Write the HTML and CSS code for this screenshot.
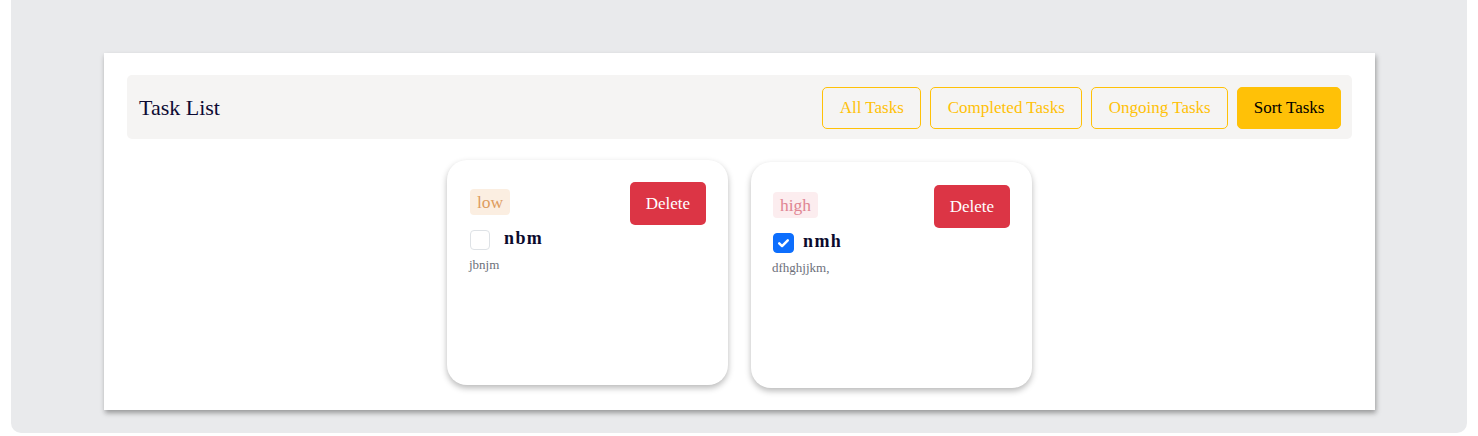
FILE: index.html
```html
<!DOCTYPE html>
<html lang="en">
<head>
<meta charset="utf-8">
<title>Task List</title>
<link rel="stylesheet" href="styles.css">
</head>
<body>
  <div class="app">
    <section class="panel">
      <header class="toolbar">
        <h1 class="toolbar-title">Task List</h1>
        <nav class="toolbar-actions">
          <button class="btn btn-outline">All Tasks</button>
          <button class="btn btn-outline">Completed Tasks</button>
          <button class="btn btn-outline">Ongoing Tasks</button>
          <button class="btn btn-solid">Sort Tasks</button>
        </nav>
      </header>
      <div class="cards">
        <article class="card">
          <div class="card-head">
            <span class="badge badge-low">low</span>
            <button class="btn-delete">Delete</button>
          </div>
          <div class="card-task">
            <span class="check"></span>
            <span class="task-title">nbm</span>
          </div>
          <p class="task-desc">jbnjm</p>
        </article>
        <article class="card card-shifted">
          <div class="card-head">
            <span class="badge badge-high">high</span>
            <button class="btn-delete">Delete</button>
          </div>
          <div class="card-task card-task-tight">
            <span class="check check-on">
              <svg viewBox="0 0 20 20" width="20" height="20"><path d="M5.5 10.3l3 2.9 6-6" fill="none" stroke="#fff" stroke-width="2.6" stroke-linecap="round" stroke-linejoin="round"/></svg>
            </span>
            <span class="task-title">nmh</span>
          </div>
          <p class="task-desc">dfhghjjkm,</p>
        </article>
      </div>
    </section>
  </div>
</body>
</html>
```
FILE: styles.css
```css
* { box-sizing: border-box; }
html, body { margin: 0; padding: 0; background: #fff; }
body {
  font-family: "Liberation Serif", "Times New Roman", Times, serif;
  padding: 0 11px 4px 11px;
}
.app {
  background: #e9eaec;
  border-radius: 0 0 10px 10px;
  padding: 53px 92px 23px 93px;
}
.panel {
  background: #fff;
  box-shadow: 1px 3px 5px rgba(0, 0, 0, 0.35);
  padding: 22px 23px 22px 23px;
}
.toolbar {
  background: #f5f4f3;
  border-radius: 5px;
  height: 64px;
  padding: 1px 11px 0 12px;
  display: flex;
  align-items: center;
  justify-content: space-between;
}
.toolbar-title {
  margin: 0;
  font-size: 22px;
  font-weight: normal;
  color: #0d0b33;
}
.toolbar-actions {
  display: flex;
  gap: 9px;
}
.btn {
  font-family: "Liberation Serif", "Times New Roman", Times, serif;
  font-size: 17px;
  line-height: 24px;
  height: 42px;
  padding: 8px 16.5px;
  border-radius: 5px;
  border: 1px solid #ffc107;
  cursor: pointer;
}
.btn-outline { background: transparent; color: #ffc107; }
.btn-solid { background: #ffc107; color: #000; padding: 8px 15.5px; }
.cards {
  display: flex;
  justify-content: center;
  align-items: flex-start;
  gap: 23px;
  margin-top: 21px;
}
.card {
  width: 281px;
  height: 225px;
  background: #fff;
  border-radius: 20px;
  box-shadow: 0 3px 6px rgba(0, 0, 0, 0.28);
  padding: 22px 22px 0 23px;
}
.card-shifted { margin-top: 2px; height: 226px; padding-top: 23px; padding-left: 22px; }
.card-head {
  display: flex;
  justify-content: space-between;
  align-items: center;
}
.badge {
  font-size: 17.5px;
  line-height: 20px;
  padding: 3px 7px;
  border-radius: 4px;
  margin-top: -3px;
}
.badge-low { background: #fbeee1; color: #de9c5e; }
.badge-high { background: #fcedef; color: #e08593; }
.btn-delete {
  font-family: "Liberation Serif", "Times New Roman", Times, serif;
  font-size: 17px;
  line-height: 25px;
  height: 43px;
  padding: 9px 16px;
  background: #dc3545;
  color: #fff;
  border: none;
  border-radius: 5px;
  cursor: pointer;
}
.card-task {
  display: flex;
  align-items: center;
  gap: 14px;
  margin-top: 5px;
}
.card-task-tight { gap: 9px; }
.check {
  width: 20px;
  height: 20px;
  border: 1px solid #dee2e6;
  border-radius: 4px;
  background: #fff;
  display: flex;
  align-items: center;
  justify-content: center;
}
.check-on {
  width: 21px;
  background: #0d6efd;
  border-color: #0d6efd;
}
.task-title {
  font-size: 18px;
  font-weight: bold;
  letter-spacing: 1.4px;
  color: #0b0a2c;
  margin-top: -4px;
}
.task-desc {
  margin: 7px 0 0 -1px;
  font-size: 13px;
  color: #6c6f7a;
}
```
